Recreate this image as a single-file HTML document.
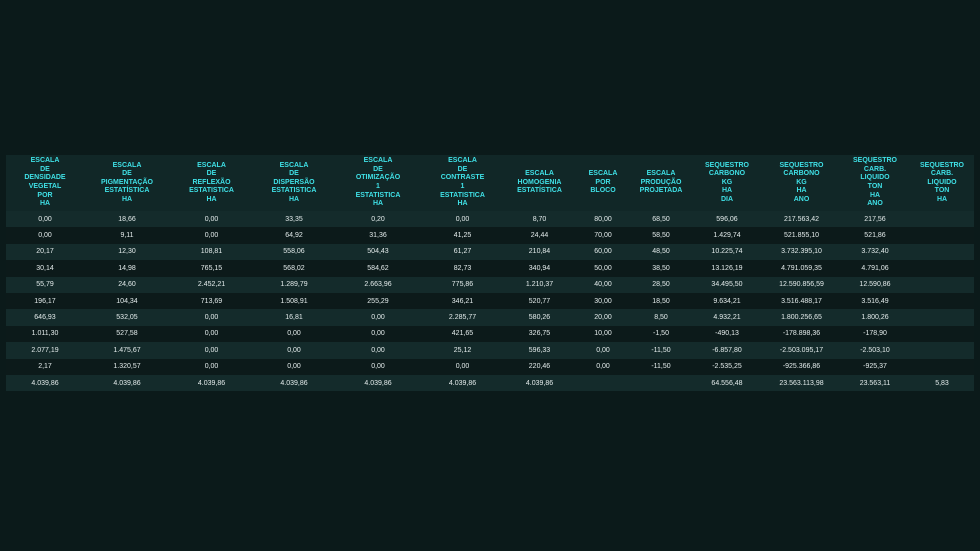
<!DOCTYPE html>
<html><head><meta charset="utf-8"><style>
body{margin:0;width:980px;height:551px;background:#0b1a1a;font-family:"Liberation Sans",Arial,sans-serif;overflow:hidden;position:relative}
.t{position:absolute;left:6px;top:155px;width:968px}
.r{display:flex;height:16.4px;align-items:center;color:#e4ecec;font-size:7px}
.r div{text-align:center;flex:none}
.h{height:56px;background:#112727;color:#3fe0e6;font-weight:bold;font-size:7px;line-height:8.6px}
.o{background:#142b2b}
.e{background:#0c1a1a}
.c1{width:78px}.c2{width:86px}.c3{width:83px}.c4{width:82px}.c5{width:86px}.c6{width:83px}.c7{width:71px}.c8{width:56px}.c9{width:60px}.c10{width:72px}.c11{width:77px}.c12{width:70px}.c13{width:64px}
</style></head><body>
<div class="t">
<div class="r h"><div class="c1">ESCALA<br>DE<br>DENSIDADE<br>VEGETAL<br>POR<br>HA</div><div class="c2">ESCALA<br>DE<br>PIGMENTAÇÃO<br>ESTATÍSTICA<br>HA</div><div class="c3">ESCALA<br>DE<br>REFLEXÃO<br>ESTATISTICA<br>HA</div><div class="c4">ESCALA<br>DE<br>DISPERSÃO<br>ESTATISTICA<br>HA</div><div class="c5">ESCALA<br>DE<br>OTIMIZAÇÃO<br>1<br>ESTATISTICA<br>HA</div><div class="c6">ESCALA<br>DE<br>CONTRASTE<br>1<br>ESTATISTICA<br>HA</div><div class="c7">ESCALA<br>HOMOGENIA<br>ESTATÍSTICA</div><div class="c8">ESCALA<br>POR<br>BLOCO</div><div class="c9">ESCALA<br>PRODUÇÃO<br>PROJETADA</div><div class="c10">SEQUESTRO<br>CARBONO<br>KG<br>HA<br>DIA</div><div class="c11">SEQUESTRO<br>CARBONO<br>KG<br>HA<br>ANO</div><div class="c12">SEQUESTRO<br>CARB.<br>LIQUIDO<br>TON<br>HA<br>ANO</div><div class="c13">SEQUESTRO<br>CARB.<br>LIQUIDO<br>TON<br>HA</div></div>
<div class="r o"><div class="c1">0,00</div><div class="c2">18,66</div><div class="c3">0,00</div><div class="c4">33,35</div><div class="c5">0,20</div><div class="c6">0,00</div><div class="c7">8,70</div><div class="c8">80,00</div><div class="c9">68,50</div><div class="c10">596,06</div><div class="c11">217.563,42</div><div class="c12">217,56</div><div class="c13"></div></div>
<div class="r e"><div class="c1">0,00</div><div class="c2">9,11</div><div class="c3">0,00</div><div class="c4">64,92</div><div class="c5">31,36</div><div class="c6">41,25</div><div class="c7">24,44</div><div class="c8">70,00</div><div class="c9">58,50</div><div class="c10">1.429,74</div><div class="c11">521.855,10</div><div class="c12">521,86</div><div class="c13"></div></div>
<div class="r o"><div class="c1">20,17</div><div class="c2">12,30</div><div class="c3">108,81</div><div class="c4">558,06</div><div class="c5">504,43</div><div class="c6">61,27</div><div class="c7">210,84</div><div class="c8">60,00</div><div class="c9">48,50</div><div class="c10">10.225,74</div><div class="c11">3.732.395,10</div><div class="c12">3.732,40</div><div class="c13"></div></div>
<div class="r e"><div class="c1">30,14</div><div class="c2">14,98</div><div class="c3">765,15</div><div class="c4">568,02</div><div class="c5">584,62</div><div class="c6">82,73</div><div class="c7">340,94</div><div class="c8">50,00</div><div class="c9">38,50</div><div class="c10">13.126,19</div><div class="c11">4.791.059,35</div><div class="c12">4.791,06</div><div class="c13"></div></div>
<div class="r o"><div class="c1">55,79</div><div class="c2">24,60</div><div class="c3">2.452,21</div><div class="c4">1.289,79</div><div class="c5">2.663,96</div><div class="c6">775,86</div><div class="c7">1.210,37</div><div class="c8">40,00</div><div class="c9">28,50</div><div class="c10">34.495,50</div><div class="c11">12.590.856,59</div><div class="c12">12.590,86</div><div class="c13"></div></div>
<div class="r e"><div class="c1">196,17</div><div class="c2">104,34</div><div class="c3">713,69</div><div class="c4">1.508,91</div><div class="c5">255,29</div><div class="c6">346,21</div><div class="c7">520,77</div><div class="c8">30,00</div><div class="c9">18,50</div><div class="c10">9.634,21</div><div class="c11">3.516.488,17</div><div class="c12">3.516,49</div><div class="c13"></div></div>
<div class="r o"><div class="c1">646,93</div><div class="c2">532,05</div><div class="c3">0,00</div><div class="c4">16,81</div><div class="c5">0,00</div><div class="c6">2.285,77</div><div class="c7">580,26</div><div class="c8">20,00</div><div class="c9">8,50</div><div class="c10">4.932,21</div><div class="c11">1.800.256,65</div><div class="c12">1.800,26</div><div class="c13"></div></div>
<div class="r e"><div class="c1">1.011,30</div><div class="c2">527,58</div><div class="c3">0,00</div><div class="c4">0,00</div><div class="c5">0,00</div><div class="c6">421,65</div><div class="c7">326,75</div><div class="c8">10,00</div><div class="c9">-1,50</div><div class="c10">-490,13</div><div class="c11">-178.898,36</div><div class="c12">-178,90</div><div class="c13"></div></div>
<div class="r o"><div class="c1">2.077,19</div><div class="c2">1.475,67</div><div class="c3">0,00</div><div class="c4">0,00</div><div class="c5">0,00</div><div class="c6">25,12</div><div class="c7">596,33</div><div class="c8">0,00</div><div class="c9">-11,50</div><div class="c10">-6.857,80</div><div class="c11">-2.503.095,17</div><div class="c12">-2.503,10</div><div class="c13"></div></div>
<div class="r e"><div class="c1">2,17</div><div class="c2">1.320,57</div><div class="c3">0,00</div><div class="c4">0,00</div><div class="c5">0,00</div><div class="c6">0,00</div><div class="c7">220,46</div><div class="c8">0,00</div><div class="c9">-11,50</div><div class="c10">-2.535,25</div><div class="c11">-925.366,86</div><div class="c12">-925,37</div><div class="c13"></div></div>
<div class="r o"><div class="c1">4.039,86</div><div class="c2">4.039,86</div><div class="c3">4.039,86</div><div class="c4">4.039,86</div><div class="c5">4.039,86</div><div class="c6">4.039,86</div><div class="c7">4.039,86</div><div class="c8"></div><div class="c9"></div><div class="c10">64.556,48</div><div class="c11">23.563.113,98</div><div class="c12">23.563,11</div><div class="c13">5,83</div></div>
</div>
</body></html>
